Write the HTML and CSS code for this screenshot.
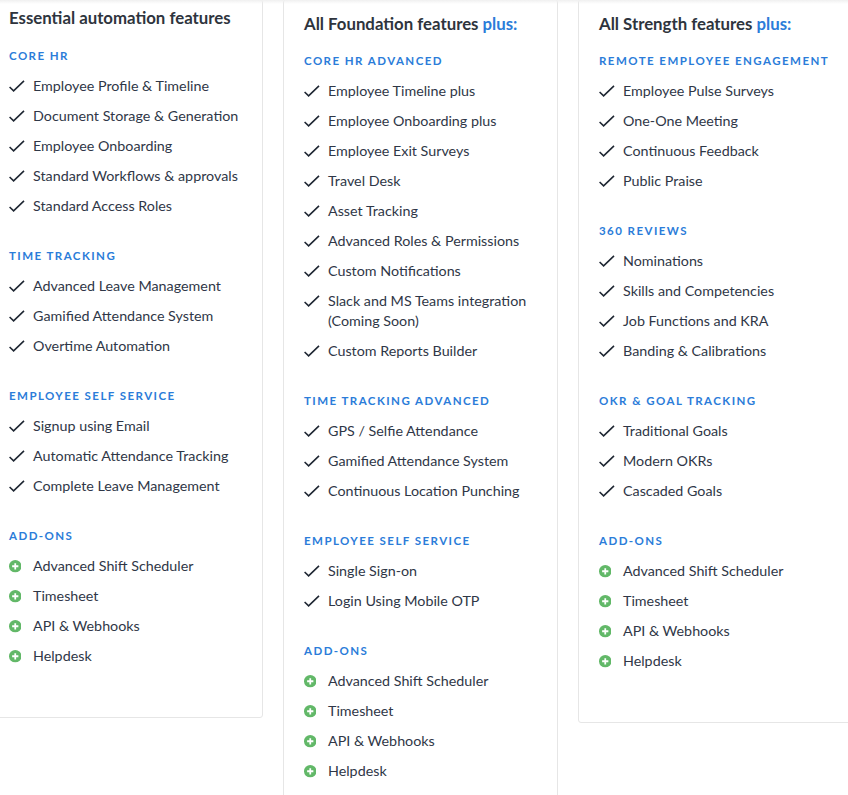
FILE: index.html
```html
<!DOCTYPE html>
<html lang="en">
<head>
<meta charset="utf-8">
<title>Plan features</title>
<link rel="stylesheet" href="styles.css">
</head>
<body>
<svg class="defs" width="0" height="0" aria-hidden="true">
  <symbol id="check" viewBox="0 0 16 16"><path d="M.6 9 4.6 12.8 15 2.8" fill="none" stroke="currentColor" stroke-width="1.6"/></symbol>
  <symbol id="plus" viewBox="0 0 12 12"><circle cx="6" cy="6" r="6" fill="#62b868"/><path d="M6 3v6M3 6h6" stroke="#fff" stroke-width="1.7"/></symbol>
</svg>
<div class="top-shade"></div>
<main class="plans">
  <section class="card card-first">
    <h2 class="title">Essential automation features</h2>
    <h3 class="group">CORE HR</h3>
    <ul class="list">
      <li><svg class="check"><use href="#check"/></svg>Employee Profile &amp; Timeline</li>
      <li><svg class="check"><use href="#check"/></svg>Document Storage &amp; Generation</li>
      <li><svg class="check"><use href="#check"/></svg>Employee Onboarding</li>
      <li><svg class="check"><use href="#check"/></svg>Standard Workflows &amp; approvals</li>
      <li><svg class="check"><use href="#check"/></svg>Standard Access Roles</li>
    </ul>
    <h3 class="group">TIME TRACKING</h3>
    <ul class="list">
      <li><svg class="check"><use href="#check"/></svg>Advanced Leave Management</li>
      <li><svg class="check"><use href="#check"/></svg>Gamified Attendance System</li>
      <li><svg class="check"><use href="#check"/></svg>Overtime Automation</li>
    </ul>
    <h3 class="group">EMPLOYEE SELF SERVICE</h3>
    <ul class="list">
      <li><svg class="check"><use href="#check"/></svg>Signup using Email</li>
      <li><svg class="check"><use href="#check"/></svg>Automatic Attendance Tracking</li>
      <li><svg class="check"><use href="#check"/></svg>Complete Leave Management</li>
    </ul>
    <h3 class="group">ADD-ONS</h3>
    <ul class="list">
      <li><svg class="plus"><use href="#plus"/></svg>Advanced Shift Scheduler</li>
      <li><svg class="plus"><use href="#plus"/></svg>Timesheet</li>
      <li><svg class="plus"><use href="#plus"/></svg>API &amp; Webhooks</li>
      <li><svg class="plus"><use href="#plus"/></svg>Helpdesk</li>
    </ul>
  </section>
  <section class="card">
    <h2 class="title">All Foundation features <span class="accent">plus:</span></h2>
    <h3 class="group">CORE HR ADVANCED</h3>
    <ul class="list">
      <li><svg class="check"><use href="#check"/></svg>Employee Timeline plus</li>
      <li><svg class="check"><use href="#check"/></svg>Employee Onboarding plus</li>
      <li><svg class="check"><use href="#check"/></svg>Employee Exit Surveys</li>
      <li><svg class="check"><use href="#check"/></svg>Travel Desk</li>
      <li><svg class="check"><use href="#check"/></svg>Asset Tracking</li>
      <li><svg class="check"><use href="#check"/></svg>Advanced Roles &amp; Permissions</li>
      <li><svg class="check"><use href="#check"/></svg>Custom Notifications</li>
      <li><svg class="check"><use href="#check"/></svg>Slack and MS Teams integration<br>(Coming Soon)</li>
      <li><svg class="check"><use href="#check"/></svg>Custom Reports Builder</li>
    </ul>
    <h3 class="group">TIME TRACKING ADVANCED</h3>
    <ul class="list">
      <li><svg class="check"><use href="#check"/></svg>GPS / Selfie Attendance</li>
      <li><svg class="check"><use href="#check"/></svg>Gamified Attendance System</li>
      <li><svg class="check"><use href="#check"/></svg>Continuous Location Punching</li>
    </ul>
    <h3 class="group">EMPLOYEE SELF SERVICE</h3>
    <ul class="list">
      <li><svg class="check"><use href="#check"/></svg>Single Sign-on</li>
      <li><svg class="check"><use href="#check"/></svg>Login Using Mobile OTP</li>
    </ul>
    <h3 class="group">ADD-ONS</h3>
    <ul class="list">
      <li><svg class="plus"><use href="#plus"/></svg>Advanced Shift Scheduler</li>
      <li><svg class="plus"><use href="#plus"/></svg>Timesheet</li>
      <li><svg class="plus"><use href="#plus"/></svg>API &amp; Webhooks</li>
      <li><svg class="plus"><use href="#plus"/></svg>Helpdesk</li>
    </ul>
  </section>
  <section class="card">
    <h2 class="title">All Strength features <span class="accent">plus:</span></h2>
    <h3 class="group">REMOTE EMPLOYEE ENGAGEMENT</h3>
    <ul class="list">
      <li><svg class="check"><use href="#check"/></svg>Employee Pulse Surveys</li>
      <li><svg class="check"><use href="#check"/></svg>One-One Meeting</li>
      <li><svg class="check"><use href="#check"/></svg>Continuous Feedback</li>
      <li><svg class="check"><use href="#check"/></svg>Public Praise</li>
    </ul>
    <h3 class="group">360 REVIEWS</h3>
    <ul class="list">
      <li><svg class="check"><use href="#check"/></svg>Nominations</li>
      <li><svg class="check"><use href="#check"/></svg>Skills and Competencies</li>
      <li><svg class="check"><use href="#check"/></svg>Job Functions and KRA</li>
      <li><svg class="check"><use href="#check"/></svg>Banding &amp; Calibrations</li>
    </ul>
    <h3 class="group">OKR &amp; GOAL TRACKING</h3>
    <ul class="list">
      <li><svg class="check"><use href="#check"/></svg>Traditional Goals</li>
      <li><svg class="check"><use href="#check"/></svg>Modern OKRs</li>
      <li><svg class="check"><use href="#check"/></svg>Cascaded Goals</li>
    </ul>
    <h3 class="group">ADD-ONS</h3>
    <ul class="list">
      <li><svg class="plus"><use href="#plus"/></svg>Advanced Shift Scheduler</li>
      <li><svg class="plus"><use href="#plus"/></svg>Timesheet</li>
      <li><svg class="plus"><use href="#plus"/></svg>API &amp; Webhooks</li>
      <li><svg class="plus"><use href="#plus"/></svg>Helpdesk</li>
    </ul>
  </section>
</main>
</body>
</html>
```
FILE: styles.css
```css
* { box-sizing: border-box; }
html, body { margin: 0; height: 795px; overflow: hidden; background: #fff; }
body { font-family: Lato, "Noto Sans", sans-serif; color: #2f3747; font-size: 14.3px; line-height: 20px; position: relative; }
.defs { position: absolute; }
.top-shade { position: absolute; left: 0; right: 0; top: 0; height: 4px; background: linear-gradient(#f0f0f0, #fff0); z-index: 1; }
.plans { display: flex; align-items: flex-start; gap: 20px; width: 900px; margin-left: -12px; margin-top: -1px; }
.card { flex: 0 0 275px; border: 1px solid #e6e6e6; border-radius: 3px; padding: 12px 20px 51px; }
.card:nth-child(2) { padding-bottom: 200px; }
.card .title { margin-bottom: 15px; }
.card-first { padding-top: 6px; }
.card-first .title { margin-bottom: 16px; }
.title { margin: 0; font-size: 16.8px; line-height: 24px; font-weight: 700; color: #2e343d; }
.accent { color: #2b7cd9; }
.group { margin: 0 0 10px; font-size: 11.5px; line-height: 20px; font-weight: 700; letter-spacing: 1.45px; color: #2b7cd9; white-space: nowrap; }
.list { margin: 0 0 30px; padding: 0; list-style: none; display: flex; flex-direction: column; gap: 10px; }
.list:last-child { margin-bottom: 0; }
.list li { position: relative; padding-left: 24px; }
.check { position: absolute; left: 0; top: 2px; width: 16px; height: 16px; color: #1f2733; }
.plus { position: absolute; left: -0.5px; top: 4px; width: 12.5px; height: 12.5px; }
```
